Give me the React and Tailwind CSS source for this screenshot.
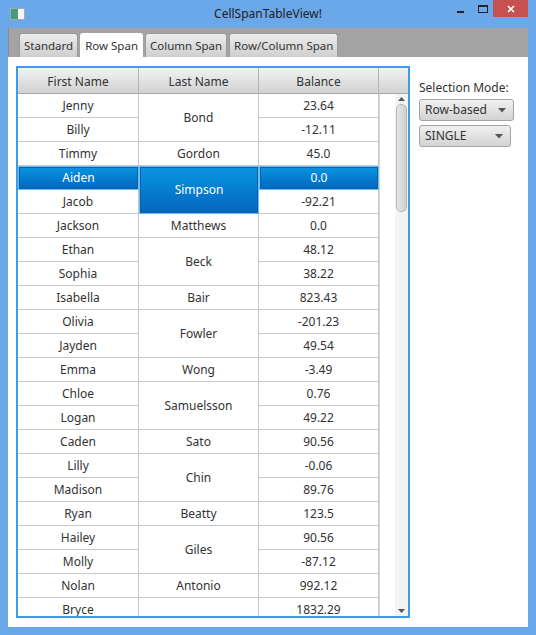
import React from 'react';

const rows = [
    { first: 'Jenny', last: 'Bond', span: 2, balance: '23.64' },
    { first: 'Billy', balance: '-12.11' },
    { first: 'Timmy', last: 'Gordon', span: 1, balance: '45.0' },
    { first: 'Aiden', last: 'Simpson', span: 2, balance: '0.0', selected: true },
    { first: 'Jacob', balance: '-92.21' },
    { first: 'Jackson', last: 'Matthews', span: 1, balance: '0.0' },
    { first: 'Ethan', last: 'Beck', span: 2, balance: '48.12' },
    { first: 'Sophia', balance: '38.22' },
    { first: 'Isabella', last: 'Bair', span: 1, balance: '823.43' },
    { first: 'Olivia', last: 'Fowler', span: 2, balance: '-201.23' },
    { first: 'Jayden', balance: '49.54' },
    { first: 'Emma', last: 'Wong', span: 1, balance: '-3.49' },
    { first: 'Chloe', last: 'Samuelsson', span: 2, balance: '0.76' },
    { first: 'Logan', balance: '49.22' },
    { first: 'Caden', last: 'Sato', span: 1, balance: '90.56' },
    { first: 'Lilly', last: 'Chin', span: 2, balance: '-0.06' },
    { first: 'Madison', balance: '89.76' },
    { first: 'Ryan', last: 'Beatty', span: 1, balance: '123.5' },
    { first: 'Hailey', last: 'Giles', span: 2, balance: '90.56' },
    { first: 'Molly', balance: '-87.12' },
    { first: 'Nolan', last: 'Antonio', span: 1, balance: '992.12' },
    { first: 'Bryce', last: '', span: 2, balance: '1832.29' },
    { first: '', balance: '' },
];

const cellBase = 'flex items-center justify-center border-r border-b border-[#c8c8c8] text-[12px]';
const selCell = 'flex items-center justify-center text-[12px] text-white border border-[#6cc0f5] bg-gradient-to-b from-[#0a95e2] to-[#0566bd] shadow-[inset_0_0_0_1px_#0a5fae]';

const Combo = ({ label, width, className = '' }) => (
    <div className={`h-[22px] ${width} ${className} flex items-center justify-between pl-[5px] pr-[7px] rounded-[3px] border border-[#a3a3a3] bg-gradient-to-b from-[#f0f0f0] to-[#d3d3d3] text-[12px] text-[#333]`}>
        <span>{label}</span>
        <svg width="8" height="5" viewBox="0 0 8 5"><path d="M0 0 L8 0 L4 4.5 Z" fill="#555" /></svg>
    </div>
);

const Tab = ({ label, active }) => (
    <div className={`h-[24px] px-[4px] flex items-center text-[11.5px] text-[#333] rounded-t-[3px] border border-b-0 ${active ? 'bg-white border-white' : 'border-[#9a9a9a] bg-gradient-to-b from-[#ececec] to-[#cfcfcf]'}`}>
        {label}
    </div>
);

export default function App() {
    return (
        <div className="w-[536px] h-[635px] bg-[#6aa8ea] flex flex-col overflow-hidden" style={{ fontFamily: '"Noto Sans", "Open Sans", sans-serif' }}>
            {/* title bar */}
            <div className="h-[28px] relative flex items-center justify-center shrink-0">
                <div className="absolute left-[10px] top-[8px] w-[15px] h-[12px] bg-[#f4f4f4] border border-[#9ab] flex">
                    <div className="w-[7px] h-full bg-[#4a9a7a]" />
                </div>
                <span className="text-[12px] text-[#222] -mt-[1px]">CellSpanTableView!</span>
                <div className="absolute left-[457px] top-[11px] w-[7px] h-[2px] bg-[#222]" />
                <div className="absolute left-[478px] top-[5px] w-[10px] h-[8px] border border-[#222] border-t-2" />
                <div className="absolute left-[493px] top-0 w-[35px] h-[17px] bg-[#c75050] flex items-center justify-center">
                    <svg width="8" height="8" viewBox="0 0 8 8"><path d="M1 1 L7 7 M7 1 L1 7" stroke="#fff" strokeWidth="1.6" /></svg>
                </div>
            </div>

            <div className="mx-[8px] flex-1 mb-[8px] flex flex-col">
                {/* tab header */}
                <div className="h-[29px] bg-[#a3a3a3] border-l border-[#8c8c8c] flex items-end gap-[2px] pl-[10px] shrink-0">
                    <Tab label="Standard" />
                    <Tab label="Row Span" active />
                    <Tab label="Column Span" />
                    <Tab label="Row/Column Span" />
                </div>

                {/* content */}
                <div className="flex-1 bg-white flex pl-[8px] pt-[9px] gap-[9px]">
                    <div className="w-[394px] h-[552px] border-2 border-[#3f9be6] flex flex-col">
                        {/* header */}
                        <div className="h-[26px] flex border-b border-[#a8a8a8] bg-gradient-to-b from-[#f2f2f2] to-[#d2d2d2] text-[12px] text-[#333] shrink-0">
                            <div className="w-[121px] pt-[2px] border-r border-[#b4b4b4] flex items-center justify-center">First Name</div>
                            <div className="w-[120px] pt-[2px] border-r border-[#b4b4b4] flex items-center justify-center">Last Name</div>
                            <div className="w-[120px] pt-[2px] border-r border-[#b4b4b4] flex items-center justify-center">Balance</div>
                            <div className="flex-1" />
                        </div>
                        {/* body */}
                        <div className="flex-1 flex overflow-hidden">
                            <div className="grid grid-cols-[121px_120px_120px] auto-rows-[24px] content-start text-[#333]">
                                {rows.map((r, i) => (
                                    <React.Fragment key={i}>
                                        <div className={r.selected ? selCell : cellBase} style={{ gridRow: i + 1, gridColumn: 1 }}>{r.first}</div>
                                        {r.span && (
                                            <div className={r.selected ? selCell : cellBase} style={{ gridRow: `${i + 1} / span ${r.span}`, gridColumn: 2 }}>{r.last}</div>
                                        )}
                                        <div className={r.selected ? selCell : cellBase} style={{ gridRow: i + 1, gridColumn: 3 }}>{r.balance}</div>
                                    </React.Fragment>
                                ))}
                            </div>
                            <div className="flex-1 border-l border-[#d8d8d8]" />
                            {/* scrollbar */}
                            <div className="w-[13px] bg-[#f4f4f4] flex flex-col items-center">
                                <div className="h-[10px] flex items-center justify-center">
                                    <svg width="7" height="4" viewBox="0 0 7 4"><path d="M0 4 L7 4 L3.5 0 Z" fill="#555" /></svg>
                                </div>
                                <div className="w-[11px] h-[108px] rounded-[5px] border border-[#b8b8b8] bg-gradient-to-r from-[#e6e6e6] to-[#cfcfcf]" />
                                <div className="flex-1" />
                                <div className="h-[11px] flex items-center justify-center">
                                    <svg width="7" height="4" viewBox="0 0 7 4"><path d="M0 0 L7 0 L3.5 4 Z" fill="#555" /></svg>
                                </div>
                            </div>
                        </div>
                    </div>

                    {/* side panel */}
                    <div className="flex flex-col pt-[14px]">
                        <div className="text-[12px] text-[#333] leading-[16px]">Selection Mode:</div>
                        <Combo label="Row-based" width="w-[95px]" className="mt-[3px]" />
                        <Combo label="SINGLE" width="w-[92px]" className="mt-[4px]" />
                    </div>
                </div>
            </div>
        </div>
    );
}
